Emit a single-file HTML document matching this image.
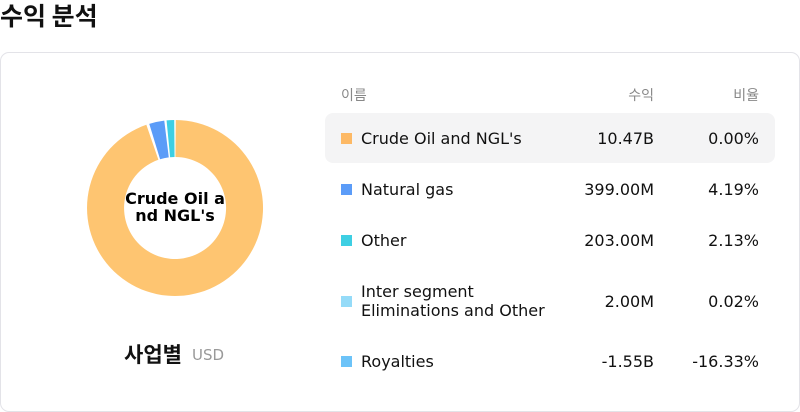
<!DOCTYPE html><html><head><meta charset="utf-8"><style>
body{margin:0;width:800px;height:412px;background:#fff;font-family:"DejaVu Sans","Liberation Sans","Noto Sans CJK KR",sans-serif;position:relative;overflow:hidden;color:#111}
.t{position:absolute;left:0;top:-3px;font-size:25px;font-weight:bold;font-family:"Noto Sans CJK KR",sans-serif}
.card{position:absolute;left:0;top:52px;width:798px;height:358px;border:1px solid #e3e3e8;border-radius:9px}
.a{position:absolute;font-size:16px;white-space:nowrap}
.h{position:absolute;font-size:14px;color:#888;top:85px;font-family:"Noto Sans CJK KR",sans-serif}
.sq{position:absolute;left:341px;width:11px;height:11px}
.r{text-align:right}
</style></head><body>
<div class="t">수익 분석</div>
<div class="card"></div>
<svg style="position:absolute;left:0;top:0" width="800" height="412">
<path d="M175.77 120 A88 88 0 1 1 146.35 124.8 L158.4 159.8 A51 51 0 1 0 175.45 157 Z" fill="#fec571"/>
<path d="M149.27 123.85 A88 88 0 0 1 164.27 120.66 L168.78 157.38 A51 51 0 0 0 160.09 159.23 Z" fill="#5b9cf8"/>
<path d="M166.57 120.4 A88 88 0 0 1 174.23 120 L174.56 157 A51 51 0 0 0 170.11 157.24 Z" fill="#3ecfe3"/>
<text x="175" y="204" text-anchor="middle" font-size="16" font-weight="bold" font-family="DejaVu Sans">Crude Oil a</text>
<text x="175" y="221" text-anchor="middle" font-size="16" font-weight="bold" font-family="DejaVu Sans">nd NGL's</text>
</svg>
<div class="a" style="left:124px;top:339px;font-size:21px;font-weight:bold;font-family:'Noto Sans CJK KR',sans-serif">사업별</div>
<div class="a" style="left:192px;top:346px;font-size:15px;color:#999">USD</div>
<div class="h" style="left:341px">이름</div>
<div class="h" style="left:600px;width:54px;text-align:right">수익</div>
<div class="h" style="left:700px;width:59px;text-align:right">비율</div>
<div style="position:absolute;left:325px;top:113px;width:450px;height:50px;background:#f4f4f5;border-radius:8px"></div>
<div class="sq" style="top:133px;background:#fdb965"></div>
<div class="a" style="left:361px;top:129px">Crude Oil and NGL's</div>
<div class="a r" style="right:146px;top:129px">10.47B</div>
<div class="a r" style="right:41px;top:129px">0.00%</div>
<div class="sq" style="top:184px;background:#5b9cf8"></div>
<div class="a" style="left:361px;top:180px">Natural gas</div>
<div class="a r" style="right:146px;top:180px">399.00M</div>
<div class="a r" style="right:41px;top:180px">4.19%</div>
<div class="sq" style="top:235px;background:#3ecfe3"></div>
<div class="a" style="left:361px;top:231px">Other</div>
<div class="a r" style="right:146px;top:231px">203.00M</div>
<div class="a r" style="right:41px;top:231px">2.13%</div>
<div class="sq" style="top:296px;background:#95dbf8"></div>
<div class="a" style="left:361px;top:282px;line-height:19px">Inter segment<br>Eliminations and Other</div>
<div class="a r" style="right:146px;top:292px">2.00M</div>
<div class="a r" style="right:41px;top:292px">0.02%</div>
<div class="sq" style="top:356px;background:#6cc3f8"></div>
<div class="a" style="left:361px;top:352px">Royalties</div>
<div class="a r" style="right:146px;top:352px">-1.55B</div>
<div class="a r" style="right:41px;top:352px">-16.33%</div>
</body></html>
